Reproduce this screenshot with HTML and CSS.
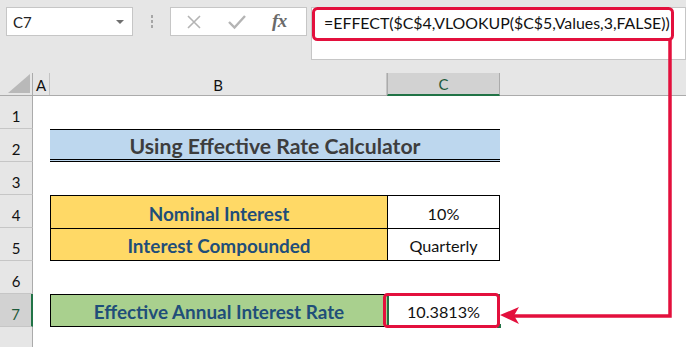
FILE: index.html
```html
<!DOCTYPE html>
<html lang="en">
<head>
<meta charset="utf-8">
<title>Effective Rate Calculator</title>
<link rel="stylesheet" href="styles.css">
</head>
<body>
<div class="page">
  <div class="toolbar">
    <div class="namebox">
      <span class="name">C7</span>
      <svg class="caret" width="8" height="5" viewBox="0 0 8 5"><path d="M0 0H8L4 4Z" fill="#6f6f6f"/></svg>
    </div>
    <div class="dots"><i></i><i></i><i></i></div>
    <div class="fxbox">
      <svg class="ico" width="16" height="16" viewBox="0 0 16 16"><path d="M2 2L14 14M14 2L2 14" stroke="#b4b4b4" stroke-width="1.6" fill="none"/></svg>
      <svg class="ico" width="18" height="16" viewBox="0 0 18 16"><path d="M1 8L6.5 13.5L17 2" stroke="#b4b4b4" stroke-width="2.4" fill="none"/></svg>
      <span class="fx">fx</span>
    </div>
    <div class="formula">
      <div class="formula-line">=EFFECT($C$4,VLOOKUP($C$5,Values,3,FALSE))</div>
    </div>
  </div>

  <div class="sheet">
    <div class="row head">
      <div class="corner"><svg width="22" height="19" viewBox="0 0 22 19"><path d="M22 0V19H0Z" fill="#b9b9b9"/></svg></div>
      <div class="colh">A</div>
      <div class="colh">B</div>
      <div class="colh sel">C</div>
      <div class="colh rest"></div>
    </div>

    <div class="row">
      <div class="rh">1</div><div></div><div></div><div></div><div></div>
    </div>

    <div class="row">
      <div class="rh">2</div><div></div>
      <div class="cell title">Using Effective Rate Calculator</div>
      <div></div>
    </div>

    <div class="row">
      <div class="rh">3</div><div></div><div></div><div></div><div></div>
    </div>

    <div class="row">
      <div class="rh">4</div><div></div>
      <div class="cell label yellow bt bl">Nominal Interest</div>
      <div class="cell val bt bl br">10%</div>
      <div></div>
    </div>

    <div class="row">
      <div class="rh">5</div><div></div>
      <div class="cell label yellow bt bl bb">Interest Compounded</div>
      <div class="cell val bt bl br bb">Quarterly</div>
      <div></div>
    </div>

    <div class="row">
      <div class="rh">6</div><div></div><div></div><div></div><div></div>
    </div>

    <div class="row">
      <div class="rh active">7</div><div></div>
      <div class="cell label green bt bl bb">Effective Annual Interest Rate</div>
      <div class="cell val activecell">10.3813%<span class="handle"></span></div>
      <div></div>
    </div>

    <div class="row">
      <div class="rh"></div><div></div><div></div><div></div><div></div>
    </div>
  </div>

  <svg class="annot" width="686" height="347" viewBox="0 0 686 347">
    <rect x="313.5" y="8.5" width="359" height="31" rx="4" ry="4" fill="none" stroke="#e3103d" stroke-width="3"/>
    <path d="M670 40V316H514" fill="none" stroke="#e3103d" stroke-width="3.5"/>
    <path d="M500 315L519 307L514 315.5L519 324Z" fill="#e3103d"/>
    <rect x="384.5" y="294.5" width="114" height="32" rx="3" ry="3" fill="none" stroke="#e3103d" stroke-width="3"/>
  </svg>
</div>
</body>
</html>
```

FILE: styles.css
```css
* { box-sizing: border-box; }
html, body { margin: 0; padding: 0; }
body {
  background: #e6e6e6;
  font-family: Lato, "Open Sans", sans-serif;
  width: 686px;
  height: 347px;
  overflow: hidden;
}
.page { position: relative; width: 686px; height: 347px; }

.toolbar {
  height: 73px;
  display: flex;
  align-items: flex-start;
  padding: 7px 0 0 6px;
}
.namebox {
  width: 127px;
  height: 29px;
  background: #fff;
  border: 1px solid #c6c6c6;
  display: flex;
  align-items: center;
  justify-content: space-between;
  padding: 0 8px 0 6px;
}
.name { font-size: 15px; color: #222; }
.caret { margin-top: 1px; }
.dots {
  width: 37px;
  height: 29px;
  display: flex;
  flex-direction: column;
  align-items: center;
  justify-content: center;
  gap: 2px;
}
.dots i { display: block; width: 2px; height: 3px; background: #a6a6a6; }
.fxbox {
  width: 137px;
  height: 29px;
  background: #fff;
  border: 1px solid #c6c6c6;
  display: flex;
  align-items: center;
  padding-left: 15px;
}
.fxbox .ico:first-child { margin-right: 26px; }
.fxbox .ico:nth-child(2) { margin-right: 26px; }
.fx {
  font-family: "Liberation Serif", serif;
  font-style: italic;
  font-weight: 700;
  font-size: 19px;
  color: #6a6a6a;
  letter-spacing: -0.5px;
  margin-top: -2px;
}
.formula {
  margin-left: 4px;
  width: 375px;
  height: 53px;
  background: #fff;
  border: 1px solid #c6c6c6;
}
.formula-line {
  height: 31px;
  padding: 5px 0 0 12px;
  font-size: 15.9px;
  color: #111;
  white-space: nowrap;
}

.sheet { background: #fff; }
.row {
  display: grid;
  grid-template-columns: 33px 17px 337px 113px 1fr;
  height: 33px;
}
.row.head {
  height: 23px;
  background: #e6e6e6;
  border-bottom: 1px solid #ababab;
}
.corner {
  border-right: 1px solid #ababab;
  display: flex;
  align-items: flex-end;
  justify-content: flex-end;
  padding: 0 2px 2px 0;
}
.colh {
  display: flex;
  align-items: center;
  justify-content: center;
  font-size: 15px;
  color: #111;
  border-right: 1px solid #c4c4c4;
  padding-top: 1px;
}
.colh.sel {
  background: #d2d2d2;
  border-left: 1px solid #ababab;
  border-right: 1px solid #ababab;
  border-bottom: 2px solid #217346;
  margin-bottom: -1px;
  color: #1d5a3a;
}
.colh.rest { border-right: none; }

.rh {
  background: #e6e6e6;
  border-right: 1px solid #ababab;
  border-bottom: 1px solid #c6c6c6;
  display: flex;
  align-items: flex-end;
  justify-content: center;
  padding-bottom: 3px;
  font-size: 15px;
  color: #111;
}
.rh.active {
  background: #d2d2d2;
  border-right: 2px solid #217346;
  color: #1d5a3a;
}

.cell {
  display: flex;
  align-items: center;
  justify-content: center;
  padding-top: 2px;
  white-space: nowrap;
}
.title {
  grid-column: 3 / span 2;
  background: #bdd7ee;
  border-top: 1px solid #000;
  border-bottom: 3px double #000;
  font-weight: 700;
  font-size: 21.2px;
  color: #3d3d3d;
}
.label {
  font-weight: 700;
  font-size: 18.9px;
  color: #1f4e79;
}
.val { font-size: 16.2px; color: #111; }
.yellow { background: #ffd966; }
.green { background: #a9d08e; }
.bt { border-top: 1px solid #000; }
.bl { border-left: 1px solid #000; }
.br { border-right: 1px solid #000; }
.bb { border-bottom: 1px solid #000; }

.activecell {
  position: relative;
  border: 2px solid #217346;
}
.handle {
  position: absolute;
  right: -4px;
  bottom: -4px;
  width: 6px;
  height: 6px;
  background: #217346;
  border: 1px solid #fff;
}

.annot {
  position: absolute;
  left: 0;
  top: 0;
  pointer-events: none;
}
```
